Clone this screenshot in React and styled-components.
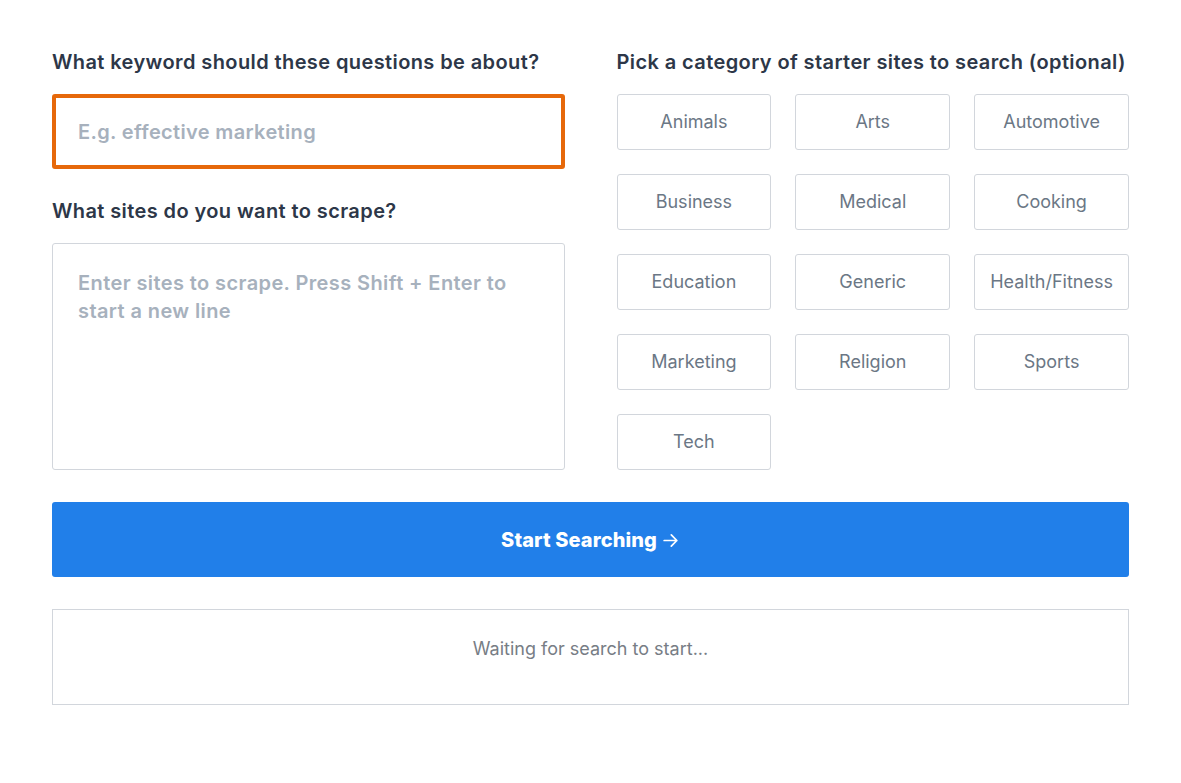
import React from "react";
import styled, { createGlobalStyle } from "styled-components";

const categories = [
  "Animals",
  "Arts",
  "Automotive",
  "Business",
  "Medical",
  "Cooking",
  "Education",
  "Generic",
  "Health/Fitness",
  "Marketing",
  "Religion",
  "Sports",
  "Tech",
];

const App = () => {
  return (
    <>
      <GlobalStyle />
      <Page>
        <Columns>
          <Column>
            <Label>What keyword should these questions be about?</Label>
            <KeywordInput placeholder="E.g. effective marketing" />
            <Label>What sites do you want to scrape?</Label>
            <SitesArea placeholder="Enter sites to scrape. Press Shift + Enter to start a new line" />
          </Column>
          <Column>
            <Label>Pick a category of starter sites to search (optional)</Label>
            <CategoryGrid>
              {categories.map((c) => (
                <CategoryButton key={c}>{c}</CategoryButton>
              ))}
            </CategoryGrid>
          </Column>
        </Columns>
        <StartButton>
          Start Searching
          <ArrowIcon
            xmlns="http://www.w3.org/2000/svg"
            viewBox="0 0 24 24"
            fill="none"
            stroke="currentColor"
            strokeWidth={2.2}
            strokeLinecap="round"
            strokeLinejoin="round"
          >
            <path d="M4 12h16M13 5l7 7-7 7" />
          </ArrowIcon>
        </StartButton>
        <StatusBox>Waiting for search to start...</StatusBox>
      </Page>
    </>
  );
};

export default App;

const GlobalStyle = createGlobalStyle`
  * {
    box-sizing: border-box;
  }
  body {
    margin: 0;
    background: #fff;
    font-family: Inter, "Noto Sans", sans-serif;
  }
`;

const Page = styled.div`
  padding: 48px 52px;
  display: flex;
  flex-direction: column;
`;

const Columns = styled.div`
  display: grid;
  grid-template-columns: 1fr 1fr;
  column-gap: 52px;
`;

const Column = styled.div`
  display: flex;
  flex-direction: column;
`;

const Label = styled.h2`
  margin: 0 0 18px;
  font-size: 20px;
  line-height: 28px;
  font-weight: 600;
  letter-spacing: 0.4px;
  color: #2d3748;
  white-space: nowrap;
`;

const KeywordInput = styled.input`
  height: 75px;
  margin-bottom: 28px;
  padding: 0 22px;
  border: 4px solid #e6680a;
  border-radius: 3px;
  outline: none;
  font-family: inherit;
  font-size: 20px;
  font-weight: 600;
  letter-spacing: 0.35px;
  color: #2d3748;
  &::placeholder {
    color: #a7b1bd;
  }
`;

const SitesArea = styled.textarea`
  height: 227px;
  padding: 25px 25px 24px;
  border: 1px solid #d2d6dc;
  border-radius: 3px;
  outline: none;
  resize: none;
  font-family: inherit;
  font-size: 20px;
  line-height: 28px;
  font-weight: 600;
  letter-spacing: 0.4px;
  color: #2d3748;
  &::placeholder {
    color: #a7b1bd;
  }
`;

const CategoryGrid = styled.div`
  display: grid;
  grid-template-columns: repeat(3, 1fr);
  column-gap: 24px;
  row-gap: 24px;
`;

const CategoryButton = styled.button`
  height: 56px;
  padding: 0 0 1px;
  background: #fff;
  border: 1px solid #d2d6dc;
  border-radius: 3px;
  font-family: inherit;
  font-size: 18px;
  color: #6b7785;
  cursor: pointer;
`;

const StartButton = styled.button`
  margin-top: 32px;
  height: 75px;
  display: flex;
  justify-content: center;
  align-items: center;
  gap: 4px;
  background: #217fe9;
  border: none;
  border-radius: 3px;
  color: #fff;
  font-family: inherit;
  font-size: 20px;
  font-weight: 800;
  letter-spacing: 0.1px;
  cursor: pointer;
`;

const ArrowIcon = styled.svg`
  width: 19px;
  height: 19px;
  margin-top: 1px;
`;

const StatusBox = styled.div`
  margin-top: 32px;
  height: 96px;
  padding-top: 26px;
  display: flex;
  justify-content: center;
  align-items: flex-start;
  border: 1px solid #d2d6dc;
  font-size: 18px;
  line-height: 26px;
  color: #777d85;
`;
